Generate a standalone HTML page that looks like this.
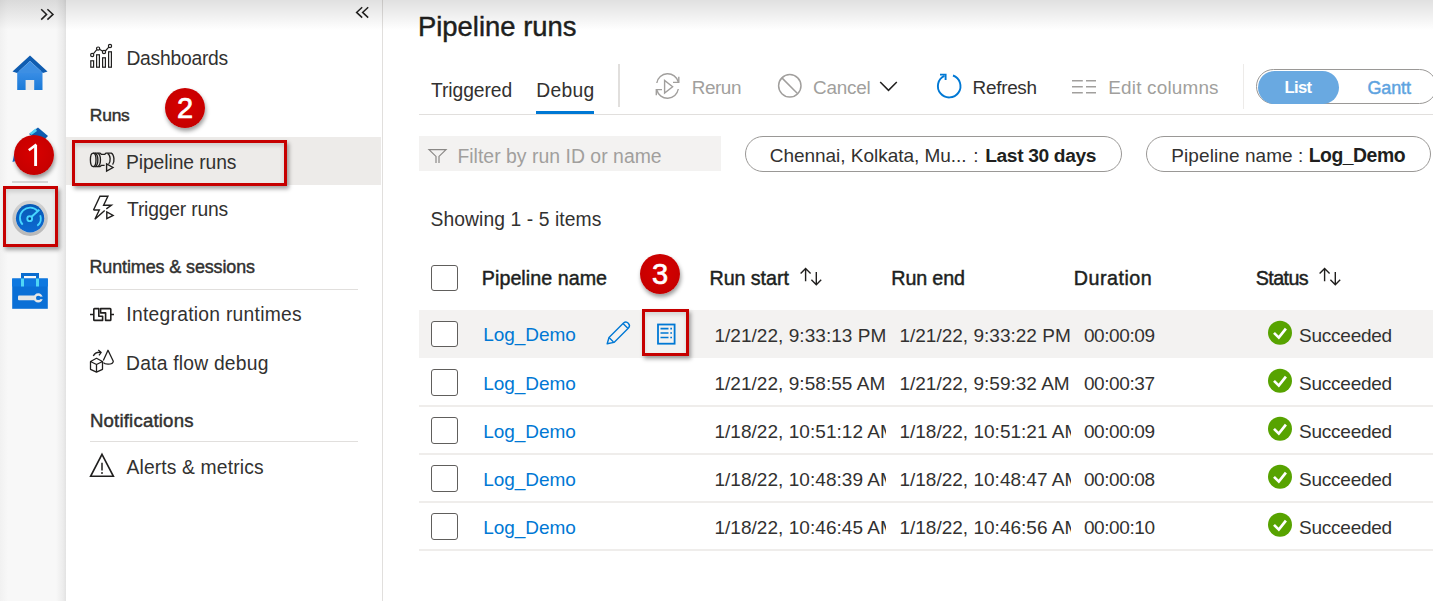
<!DOCTYPE html>
<html><head><meta charset="utf-8"><title>Pipeline runs</title><style>
html,body{margin:0;padding:0;width:1433px;height:601px;overflow:hidden;background:#fff;position:relative}
body{font-family:"Liberation Sans",sans-serif}
.t{position:absolute;white-space:nowrap;line-height:1}
#rail{position:absolute;left:0;top:0;width:66px;height:601px;background:linear-gradient(90deg,#f1f1f1 0px,#f8f8f8 8px,#f8f8f8 56px,#ececec 63px,#e2e2e2 66px)}
#topshade{position:absolute;left:0;top:0;width:1433px;height:30px;background:linear-gradient(180deg,rgba(0,0,0,0.12),rgba(0,0,0,0));pointer-events:none;z-index:5}
#navsel{position:absolute;left:66px;top:137px;width:315px;height:48px;background:#edebe9}
#navborder{position:absolute;left:382px;top:0;width:1px;height:601px;background:#e1dfdd}
.sep{position:absolute;height:1px;background:#e1dfdd}
.pill{position:absolute;top:136px;height:36px;border:1px solid #9a9896;border-radius:18px;box-sizing:border-box}
.cb{position:absolute;left:431px;width:27px;height:26.8px;border:1px solid #605e5c;border-radius:3px;box-sizing:border-box;background:#fff}
.ok{position:absolute;width:24px;height:24px;border-radius:50%;background:#57a300}
.rbox{position:absolute;box-sizing:border-box;border:3px solid #c60000;box-shadow:2px 3px 4px rgba(0,0,0,0.35), inset 0 3px 4px rgba(0,0,0,0.12);z-index:4}
.badge{position:absolute;width:40px;height:40px;border-radius:50%;background:radial-gradient(circle at 50% 45%,#d80000 0,#c80000 65%,#b40000 100%);box-shadow:1px 3px 4px rgba(0,0,0,0.4);color:#fff;font-size:29px;line-height:41px;text-align:center;z-index:6;-webkit-text-stroke:0.7px #fff}

</style></head>
<body>
<div id="rail"></div><div id="topshade"></div><div class="t" style="left:126.4px;top:48.66px;font-size:19.3px;font-weight:400;color:#323130;letter-spacing:-0.234px;">Dashboards</div>
<div class="t" style="left:89.8px;top:106.97px;font-size:17.4px;font-weight:400;color:#323130;letter-spacing:-0.2px;-webkit-text-stroke:0.45px #323130;">Runs</div>
<div id="navsel"></div><div class="t" style="left:126.0px;top:152.66px;font-size:19.3px;font-weight:400;color:#323130;letter-spacing:-0.083px;">Pipeline runs</div>
<div class="t" style="left:127.0px;top:200.46px;font-size:19.3px;font-weight:400;color:#323130;letter-spacing:-0.182px;">Trigger runs</div>
<div class="t" style="left:89.5px;top:258.65px;font-size:17.9px;font-weight:400;color:#323130;letter-spacing:-0.083px;-webkit-text-stroke:0.45px #323130;">Runtimes &amp; sessions</div>
<div class="sep" style="left:90px;top:289px;width:268px"></div><div class="t" style="left:126.3px;top:305.36px;font-size:19.3px;font-weight:400;color:#323130;letter-spacing:0.263px;">Integration runtimes</div>
<div class="t" style="left:126.0px;top:353.66px;font-size:19.3px;font-weight:400;color:#323130;letter-spacing:0.215px;">Data flow debug</div>
<div class="t" style="left:89.9px;top:411.66px;font-size:18.6px;font-weight:400;color:#323130;letter-spacing:0.191px;-webkit-text-stroke:0.45px #323130;">Notifications</div>
<div class="sep" style="left:90px;top:441px;width:268px"></div><div class="t" style="left:126.5px;top:457.96px;font-size:19.3px;font-weight:400;color:#323130;letter-spacing:0.14px;">Alerts &amp; metrics</div>
<div id="navborder"></div><div class="t" style="left:418.0px;top:12.81px;font-size:27.4px;font-weight:400;color:#201f1e;letter-spacing:0.008px;-webkit-text-stroke:0.45px #201f1e;">Pipeline runs</div>
<div class="t" style="left:431.0px;top:80.96px;font-size:19.3px;font-weight:400;color:#323130;letter-spacing:-0.075px;">Triggered</div>
<div class="t" style="left:536.3px;top:80.96px;font-size:19.3px;font-weight:400;color:#323130;letter-spacing:0.275px;">Debug</div>
<div style="position:absolute;left:536px;top:111px;width:58px;height:3px;background:#0078d4"></div><div style="position:absolute;left:419px;top:114px;width:1014px;height:1px;background:#e1dfdd"></div><div style="position:absolute;left:618px;top:64px;width:2px;height:43px;background:#e1dfdd"></div><div style="position:absolute;left:1243px;top:64px;width:1px;height:45px;background:#edebe9"></div><div class="t" style="left:691.7px;top:78.80px;font-size:18.9px;font-weight:400;color:#a19f9d;letter-spacing:-0.425px;">Rerun</div>
<div class="t" style="left:813.0px;top:78.80px;font-size:18.9px;font-weight:400;color:#a19f9d;letter-spacing:-0.24px;">Cancel</div>
<div class="t" style="left:972.6px;top:79.00px;font-size:18.9px;font-weight:400;color:#323130;letter-spacing:-0.283px;">Refresh</div>
<div class="t" style="left:1108.3px;top:79.00px;font-size:18.9px;font-weight:400;color:#a19f9d;letter-spacing:0.192px;">Edit columns</div>
<div style="position:absolute;left:1256px;top:69px;width:181px;height:35px;border:1px solid #9a9896;border-radius:18px;box-sizing:border-box"></div><div style="position:absolute;left:1257.5px;top:71px;width:81px;height:33px;background:#69a9e1;border-radius:17px"></div><div class="t" style="left:1284.5px;top:79.95px;font-size:16.6px;font-weight:700;color:#ffffff;letter-spacing:-0.634px;">List</div>
<div class="t" style="left:1367.4px;top:78.76px;font-size:18.0px;font-weight:400;color:#5ea3e0;letter-spacing:-0.1px;-webkit-text-stroke:0.45px #5ea3e0;">Gantt</div>
<div style="position:absolute;left:419px;top:136px;width:302px;height:35px;background:#f3f2f1"></div><div class="t" style="left:457.4px;top:146.88px;font-size:19.4px;font-weight:400;color:#a19f9d;letter-spacing:0.026px;">Filter by run ID or name</div>
<div class="pill" style="left:745px;width:377px"></div><div class="t" style="left:769.7px;top:146.02px;font-size:19.0px;font-weight:400;color:#323130;letter-spacing:-0.027px;">Chennai, Kolkata, Mu...</div>
<div class="t" style="left:973.2px;top:146.02px;font-size:19px;font-weight:400;color:#323130;">:</div>
<div class="t" style="left:985.2px;top:145.85px;font-size:19.2px;font-weight:700;color:#201f1e;letter-spacing:-0.354px;">Last 30 days</div>
<div class="pill" style="left:1145.5px;width:285px"></div><div class="t" style="left:1171.3px;top:145.92px;font-size:19.0px;font-weight:400;color:#323130;letter-spacing:0.079px;">Pipeline name :</div>
<div class="t" style="left:1308.7px;top:145.88px;font-size:19.4px;font-weight:700;color:#201f1e;letter-spacing:-0.485px;">Log_Demo</div>
<div class="t" style="left:430.5px;top:210.46px;font-size:19.3px;font-weight:400;color:#323130;letter-spacing:0.083px;">Showing 1 - 5 items</div>
<div class="cb" style="top:264.5px"></div><div class="t" style="left:481.8px;top:268.62px;font-size:19.7px;font-weight:400;color:#201f1e;letter-spacing:0.042px;-webkit-text-stroke:0.45px #201f1e;">Pipeline name</div>
<div class="t" style="left:709.5px;top:268.62px;font-size:19.7px;font-weight:400;color:#201f1e;letter-spacing:-0.062px;-webkit-text-stroke:0.45px #201f1e;">Run start</div>
<div class="t" style="left:891.3px;top:268.62px;font-size:19.7px;font-weight:400;color:#201f1e;letter-spacing:-0.133px;-webkit-text-stroke:0.45px #201f1e;">Run end</div>
<div class="t" style="left:1073.7px;top:268.62px;font-size:19.7px;font-weight:400;color:#201f1e;letter-spacing:0.515px;-webkit-text-stroke:0.45px #201f1e;">Duration</div>
<div class="t" style="left:1255.8px;top:268.62px;font-size:19.7px;font-weight:400;color:#201f1e;letter-spacing:-0.6px;-webkit-text-stroke:0.45px #201f1e;">Status</div>
<div style="position:absolute;left:419px;top:310px;width:1014px;height:48px;background:#f3f2f1"></div><div class="cb" style="top:320.5px"></div><div class="t" style="left:483.2px;top:324.52px;font-size:19.0px;font-weight:400;color:#0078d4;letter-spacing:-0.056px;">Log_Demo</div>
<div class="t" style="left:714.4px;top:325.92px;font-size:19.0px;font-weight:400;color:#323130;width:172.1px;overflow:hidden;letter-spacing:0.044px;">1/21/22, 9:33:13 PM</div>
<div class="t" style="left:899.4px;top:325.92px;font-size:19.0px;font-weight:400;color:#323130;width:172.1px;overflow:hidden;letter-spacing:0.011px;">1/21/22, 9:33:22 PM</div>
<div class="t" style="left:1083.9px;top:325.92px;font-size:19.0px;font-weight:400;color:#323130;letter-spacing:-0.4px;">00:00:09</div>
<svg style="position:absolute;left:1264px;top:318px" width="32" height="32" viewBox="0 0 32 32"><circle cx="16" cy="14.8" r="12" fill="#57a300"/><path d="M10 14.9 L14.8 19.6 L21.9 10.6" stroke="#fff" stroke-width="2.7" fill="none"/></svg><div class="t" style="left:1299.0px;top:325.92px;font-size:19.0px;font-weight:400;color:#323130;letter-spacing:-0.236px;">Succeeded</div>
<div style="position:absolute;left:419px;top:405px;width:1014px;height:2px;background:#efedeb"></div><div class="cb" style="top:369.3px"></div><div class="t" style="left:483.2px;top:374.12px;font-size:19.0px;font-weight:400;color:#0078d4;letter-spacing:-0.056px;">Log_Demo</div>
<div class="t" style="left:714.4px;top:373.92px;font-size:19.0px;font-weight:400;color:#323130;width:172.1px;overflow:hidden;letter-spacing:0.044px;">1/21/22, 9:58:55 AM</div>
<div class="t" style="left:899.4px;top:373.92px;font-size:19.0px;font-weight:400;color:#323130;width:172.1px;overflow:hidden;letter-spacing:0.011px;">1/21/22, 9:59:32 AM</div>
<div class="t" style="left:1083.9px;top:373.92px;font-size:19.0px;font-weight:400;color:#323130;letter-spacing:-0.4px;">00:00:37</div>
<svg style="position:absolute;left:1264px;top:366px" width="32" height="32" viewBox="0 0 32 32"><circle cx="16" cy="14.8" r="12" fill="#57a300"/><path d="M10 14.9 L14.8 19.6 L21.9 10.6" stroke="#fff" stroke-width="2.7" fill="none"/></svg><div class="t" style="left:1299.0px;top:373.92px;font-size:19.0px;font-weight:400;color:#323130;letter-spacing:-0.236px;">Succeeded</div>
<div style="position:absolute;left:419px;top:453px;width:1014px;height:2px;background:#efedeb"></div><div class="cb" style="top:417.3px"></div><div class="t" style="left:483.2px;top:422.12px;font-size:19.0px;font-weight:400;color:#0078d4;letter-spacing:-0.056px;">Log_Demo</div>
<div class="t" style="left:714.4px;top:421.92px;font-size:19.0px;font-weight:400;color:#323130;width:172.1px;overflow:hidden;letter-spacing:0.044px;">1/18/22, 10:51:12 AM</div>
<div class="t" style="left:899.4px;top:421.92px;font-size:19.0px;font-weight:400;color:#323130;width:172.1px;overflow:hidden;letter-spacing:0.011px;">1/18/22, 10:51:21 AM</div>
<div class="t" style="left:1083.9px;top:421.92px;font-size:19.0px;font-weight:400;color:#323130;letter-spacing:-0.4px;">00:00:09</div>
<svg style="position:absolute;left:1264px;top:414px" width="32" height="32" viewBox="0 0 32 32"><circle cx="16" cy="14.8" r="12" fill="#57a300"/><path d="M10 14.9 L14.8 19.6 L21.9 10.6" stroke="#fff" stroke-width="2.7" fill="none"/></svg><div class="t" style="left:1299.0px;top:421.92px;font-size:19.0px;font-weight:400;color:#323130;letter-spacing:-0.236px;">Succeeded</div>
<div style="position:absolute;left:419px;top:501px;width:1014px;height:2px;background:#efedeb"></div><div class="cb" style="top:465.3px"></div><div class="t" style="left:483.2px;top:470.12px;font-size:19.0px;font-weight:400;color:#0078d4;letter-spacing:-0.056px;">Log_Demo</div>
<div class="t" style="left:714.4px;top:469.92px;font-size:19.0px;font-weight:400;color:#323130;width:172.1px;overflow:hidden;letter-spacing:0.044px;">1/18/22, 10:48:39 AM</div>
<div class="t" style="left:899.4px;top:469.92px;font-size:19.0px;font-weight:400;color:#323130;width:172.1px;overflow:hidden;letter-spacing:0.011px;">1/18/22, 10:48:47 AM</div>
<div class="t" style="left:1083.9px;top:469.92px;font-size:19.0px;font-weight:400;color:#323130;letter-spacing:-0.4px;">00:00:08</div>
<svg style="position:absolute;left:1264px;top:462px" width="32" height="32" viewBox="0 0 32 32"><circle cx="16" cy="14.8" r="12" fill="#57a300"/><path d="M10 14.9 L14.8 19.6 L21.9 10.6" stroke="#fff" stroke-width="2.7" fill="none"/></svg><div class="t" style="left:1299.0px;top:469.92px;font-size:19.0px;font-weight:400;color:#323130;letter-spacing:-0.236px;">Succeeded</div>
<div style="position:absolute;left:419px;top:549px;width:1014px;height:2px;background:#efedeb"></div><div class="cb" style="top:513.3px"></div><div class="t" style="left:483.2px;top:518.12px;font-size:19.0px;font-weight:400;color:#0078d4;letter-spacing:-0.056px;">Log_Demo</div>
<div class="t" style="left:714.4px;top:517.92px;font-size:19.0px;font-weight:400;color:#323130;width:172.1px;overflow:hidden;letter-spacing:0.044px;">1/18/22, 10:46:45 AM</div>
<div class="t" style="left:899.4px;top:517.92px;font-size:19.0px;font-weight:400;color:#323130;width:172.1px;overflow:hidden;letter-spacing:0.011px;">1/18/22, 10:46:56 AM</div>
<div class="t" style="left:1083.9px;top:517.92px;font-size:19.0px;font-weight:400;color:#323130;letter-spacing:-0.4px;">00:00:10</div>
<svg style="position:absolute;left:1264px;top:510px" width="32" height="32" viewBox="0 0 32 32"><circle cx="16" cy="14.8" r="12" fill="#57a300"/><path d="M10 14.9 L14.8 19.6 L21.9 10.6" stroke="#fff" stroke-width="2.7" fill="none"/></svg><div class="t" style="left:1299.0px;top:517.92px;font-size:19.0px;font-weight:400;color:#323130;letter-spacing:-0.236px;">Succeeded</div>
<svg style="position:absolute;left:36px;top:2px;z-index:7" width="24" height="24" viewBox="0 0 24 24" fill="none"><path d="M5.2 7.2 L10.6 12.4 L5.2 17.6 M11.4 7.2 L17 12.4 L11.4 17.6" stroke="#201f1e" stroke-width="1.5"/></svg>
<svg style="position:absolute;left:350px;top:0px;z-index:7" width="24" height="24" viewBox="0 0 24 24" fill="none"><path d="M12.2 7.2 L6.6 12.4 L12.2 17.6 M18.2 7.2 L12.6 12.4 L18.2 17.6" stroke="#201f1e" stroke-width="1.5"/></svg>
<svg style="position:absolute;left:0px;top:40px;z-index:2" width="70" height="70" viewBox="0 0 70 70" fill="none"><defs><linearGradient id="hb" x1="0" y1="0" x2="0" y2="1"><stop offset="0" stop-color="#3c8fe6"/><stop offset="1" stop-color="#1a7ad8"/></linearGradient></defs><path d="M17.2 31 L42.5 31 L42.5 50 L17.2 50 Z" fill="url(#hb)"/><path d="M12.5 31.5 L30 15.5 L47.5 31.5 L43 33 L30 21 L17 33 Z" fill="#0f5cb0"/><path d="M17 33 L30 21 L43 33 Z" fill="#3d8fe3"/><rect x="25.6" y="40" width="8.6" height="10" fill="#e8e8e8"/></svg>
<svg style="position:absolute;left:0px;top:110px;z-index:1" width="70" height="70" viewBox="0 0 70 70" fill="none"><path d="M12.5 52 L14 45 L36 22 L41 27 L19 50 Z" fill="#1a6fd0"/><path d="M29 24 L38 17.5 L48 26 L41 33 Z" fill="#0f5cb0"/><path d="M29.5 23.5 L35.5 18.5 L37 21 L31.5 25 Z" fill="#50d0f5"/></svg>
<div style="position:absolute;left:6px;top:189px;width:49px;height:55px;background:#ececec;z-index:1"></div><div style="position:absolute;left:12px;top:181px;width:36px;height:1.5px;background:#d6d6d6;z-index:1"></div><svg style="position:absolute;left:10px;top:198px;z-index:2" width="40" height="40" viewBox="0 0 40 40" fill="none"><defs><linearGradient id="mb" x1="0" y1="0" x2="0" y2="1"><stop offset="0" stop-color="#0858b4"/><stop offset="1" stop-color="#0c6ad2"/></linearGradient><linearGradient id="mr" x1="0" y1="0" x2="0" y2="1"><stop offset="0" stop-color="#d2d2d2"/><stop offset="1" stop-color="#b8b8b8"/></linearGradient></defs><circle cx="20.1" cy="20.2" r="16" fill="none" stroke="url(#mr)" stroke-width="3.4"/><circle cx="20.1" cy="20.2" r="14.2" fill="url(#mb)"/><path d="M12.7 26.7 A9.5 9.5 0 0 1 27.5 12.8" stroke="#48d6ff" stroke-width="1.8"/><path d="M30.2 17.2 A9.5 9.5 0 0 1 27.3 27.8" stroke="#48d6ff" stroke-width="1.8"/><circle cx="19.7" cy="20.7" r="2.4" stroke="#48d6ff" stroke-width="1.9" fill="#063f8a"/><path d="M21.6 18.8 L29.3 11.8" stroke="#48d6ff" stroke-width="2"/></svg>
<svg style="position:absolute;left:0px;top:250px;z-index:2" width="70" height="70" viewBox="0 0 70 70" fill="none"><path d="M21 23 L39 23 L39 30 L36 30 L36 26 L24 26 L24 30 L21 30 Z" fill="#0a6ccf"/><rect x="12.2" y="28.5" width="35.6" height="30.3" fill="#0a6fd6"/><rect x="12.2" y="28.5" width="35.6" height="8" fill="#0e78e0"/><rect x="21" y="28.5" width="3" height="8" fill="#4fd6f5"/><rect x="36" y="28.5" width="3" height="8" fill="#4fd6f5"/><rect x="18" y="45.6" width="17.5" height="4.6" rx="1" fill="#e6e6e6"/><circle cx="38.2" cy="47.9" r="3.4" stroke="#e6e6e6" stroke-width="2.4"/><rect x="39" y="46.6" width="4" height="2.6" fill="#0a6fd6"/></svg>
<svg style="position:absolute;left:86px;top:40px;z-index:2" width="30" height="30" viewBox="0 0 30 30" fill="none"><g stroke="#201f1e" stroke-width="1.2"><rect x="4.8" y="20.8" width="2.8" height="6.4"/><rect x="10.6" y="14.8" width="2.8" height="12.4"/><rect x="16.6" y="17.8" width="2.8" height="9.4"/><rect x="22.6" y="11.8" width="2.8" height="15.4"/><path d="M7.3 13.8 L10.8 9.7 M13.5 9.3 L16.7 11.2 M19.3 11 L22.8 7.2"/><circle cx="6.2" cy="15" r="1.6"/><circle cx="12.1" cy="8.6" r="1.6"/><circle cx="18" cy="12" r="1.6"/><circle cx="24" cy="6" r="1.6"/></g></svg>
<svg style="position:absolute;left:86px;top:146px;z-index:2" width="32" height="32" viewBox="0 0 32 32" fill="none"><g stroke="#201f1e" stroke-width="1.35"><ellipse cx="7.2" cy="13.85" rx="2.8" ry="6.8"/><path d="M9 7.1 C12.8 8.5 12.8 19.2 9 20.6"/><path d="M11.6 7.1 C15.4 8.5 15.4 19.2 11.6 20.6"/><path d="M7.2 7.05 L14 7.05 L15.3 8.3 L18.8 8.3 L20 7.05 L25.6 7.05"/><path d="M7.2 20.65 L14 20.65 L15.3 19.4 L18.6 19.4"/><path d="M21.6 7.3 C24.8 9 24.8 16 22.6 18"/><path d="M25.2 7.1 C28.6 8.6 28.6 16.5 26.6 18.6"/><path d="M20.6 17.9 L20.6 25 L27 21.5 Z"/></g></svg>
<svg style="position:absolute;left:86px;top:192px;z-index:2" width="32" height="32" viewBox="0 0 32 32" fill="none"><g stroke="#201f1e" stroke-width="1.4" stroke-linejoin="miter"><path d="M7.5 18 L14 4.3 L21.9 4.3 L17.6 13.2 L25.4 13.2 L20.3 16.9"/><path d="M18.7 18.5 L8.9 27.2 L13.3 18 L7.5 18"/><path d="M20.8 20 L20.8 26.7 L27.1 23.4 Z"/></g></svg>
<svg style="position:absolute;left:86px;top:299px;z-index:2" width="32" height="32" viewBox="0 0 32 32" fill="none"><g stroke="#201f1e" stroke-width="1.6" stroke-linejoin="round"><path d="M4 15.5 L7.8 15.5 M24.8 15.5 L28 15.5"/><path d="M8.5 9.6 L12.8 9.6 L12.8 17.2 L16.6 17.2 L16.6 21.4 L8.5 21.4 Q7.8 21.4 7.8 20.7 L7.8 10.3 Q7.8 9.6 8.5 9.6 Z"/><path d="M14.6 9.6 L24.1 9.6 Q24.8 9.6 24.8 10.3 L24.8 20.7 Q24.8 21.4 24.1 21.4 L19.6 21.4 L19.6 13.9 L14.6 13.9 Z"/></g></svg>
<svg style="position:absolute;left:86px;top:345px;z-index:2" width="32" height="32" viewBox="0 0 32 32" fill="none"><g stroke="#201f1e" stroke-width="1.3" stroke-linejoin="round"><path d="M10.5 13.3 L16.5 16.5 L10.5 19.5 L4.5 16.5 Z M4.5 16.5 L4.5 24.3 L10.5 27.2 L16.5 24.3 L16.5 16.5 M10.5 19.5 L10.5 27.2"/><path d="M17.3 15.5 L22 5.3 L27.3 16.2 Q27 19.3 22 19.2 Q18.5 19 17.4 17.6"/><path d="M7.3 11 Q9.5 6.5 15 7.4 M12.3 5 L15.2 7.4 L13 10.3"/></g></svg>
<svg style="position:absolute;left:86px;top:449px;z-index:2" width="32" height="32" viewBox="0 0 32 32" fill="none"><path d="M16 5.3 L27.4 27.3 L4.6 27.3 Z" stroke="#201f1e" stroke-width="1.6" stroke-linejoin="miter"/><path d="M16 13.8 L16 21.5" stroke="#201f1e" stroke-width="1.5"/><circle cx="16" cy="24" r="0.95" fill="#201f1e"/></svg>
<svg style="position:absolute;left:650px;top:70px;z-index:2" width="32" height="32" viewBox="0 0 32 32" fill="none"><g stroke="#a19f9d" stroke-width="1.4"><path d="M6.8 13 A11 11 0 0 1 28.3 12"/><path d="M28.8 6.8 L28.8 12.4 L23 12.4"/><path d="M28.3 19 A11 11 0 0 1 6.8 20"/><path d="M6.3 25.2 L6.3 19.6 L12 19.6"/><path d="M14.6 10.5 L14.6 23 L22.6 16.8 Z" stroke-linejoin="miter"/></g></svg>
<svg style="position:absolute;left:773px;top:70px;z-index:2" width="32" height="32" viewBox="0 0 32 32" fill="none"><g stroke="#a19f9d" stroke-width="1.5"><circle cx="16.8" cy="15.8" r="11.2"/><path d="M8.9 7.9 L24.7 23.7"/></g></svg>
<svg style="position:absolute;left:876px;top:76px;z-index:2" width="24" height="20" viewBox="0 0 24 20" fill="none"><path d="M4.2 6 L12.5 14.4 L20.8 6" stroke="#201f1e" stroke-width="1.5"/></svg>
<svg style="position:absolute;left:932px;top:70px;z-index:2" width="32" height="32" viewBox="0 0 32 32" fill="none"><g stroke="#0078d4" stroke-width="1.9"><path d="M21 5.5 A11.3 11.3 0 1 1 12.4 5.9"/><path d="M8 4.6 L13.6 4.6 L13.6 10"/></g></svg>
<svg style="position:absolute;left:1068px;top:70px;z-index:2" width="32" height="32" viewBox="0 0 32 32" fill="none"><g stroke="#a19f9d" stroke-width="1.6"><path d="M4 10.7 L14.8 10.7 M4 16.7 L14.8 16.7 M4 22.7 L14.8 22.7 M18 10.7 L28 10.7 M18 16.7 L28 16.7 M18 22.7 L28 22.7"/></g></svg>
<svg style="position:absolute;left:424px;top:140px;z-index:2" width="26" height="30" viewBox="0 0 26 30" fill="none"><path d="M12 23 L12 16.4 L5 9.6 L22 9.6 L15 16.4 L15 23" stroke="#8a8886" stroke-width="1.2" stroke-linejoin="miter"/></svg>
<svg style="position:absolute;left:796px;top:262px;z-index:2" width="30" height="30" viewBox="0 0 30 30" fill="none"><g stroke="#201f1e" stroke-width="1.4"><path d="M9.6 6.8 L9.6 19.2 M4.6 11.6 L9.6 6.6 L14.6 11.6"/><path d="M20.3 10 L20.3 23 M15.4 17.8 L20.3 22.8 L25.2 17.8"/></g></svg>
<svg style="position:absolute;left:1315px;top:262px;z-index:2" width="30" height="30" viewBox="0 0 30 30" fill="none"><g stroke="#201f1e" stroke-width="1.4"><path d="M9.6 6.8 L9.6 19.2 M4.6 11.6 L9.6 6.6 L14.6 11.6"/><path d="M20.3 10 L20.3 23 M15.4 17.8 L20.3 22.8 L25.2 17.8"/></g></svg>
<svg style="position:absolute;left:602px;top:316px;z-index:2" width="32" height="32" viewBox="0 0 32 32" fill="none"><g stroke="#0078d4" stroke-width="1.4" stroke-linejoin="round"><path d="M5.2 27.8 L7 21.5 L21.5 7 Q24 4.8 26.3 7.2 Q28.6 9.6 26.5 12 L12 26.4 Z"/><path d="M7 21.5 L11.5 26 M21 7.5 L25.8 12.3"/></g></svg>
<svg style="position:absolute;left:638px;top:305px;z-index:3" width="56" height="56" viewBox="0 0 56 56" fill="none"><g stroke="#0078d4" stroke-width="1.8"><rect x="20" y="19.5" width="16.6" height="19.2"/></g><g stroke="#0078d4" stroke-width="1.6"><path d="M22.5 23.6 L30.5 23.6 M22.5 28 L30.5 28 M22.5 32.5 L30.5 32.5 M32.3 23.6 L34 23.6 M32.3 28 L34 28 M32.3 32.5 L34 32.5"/></g></svg>
<div class="rbox" style="left:72px;top:140px;width:215px;height:46px"></div><div class="rbox" style="left:3px;top:186px;width:55px;height:61px"></div><div class="rbox" style="left:642px;top:309px;width:47px;height:47px"></div><div class="badge" style="left:14px;top:135px"><svg width="40" height="40" viewBox="0 0 40 40" style="position:absolute;left:0;top:0"><path d="M21.6 10 L21.6 31" stroke="#fff" stroke-width="2.9" fill="none"/><path d="M22.4 9.5 L14.8 15.2" stroke="#fff" stroke-width="2.6" fill="none"/></svg></div><div class="badge" style="left:165px;top:88px">2</div><div class="badge" style="left:640px;top:254px">3</div>
</body></html>
